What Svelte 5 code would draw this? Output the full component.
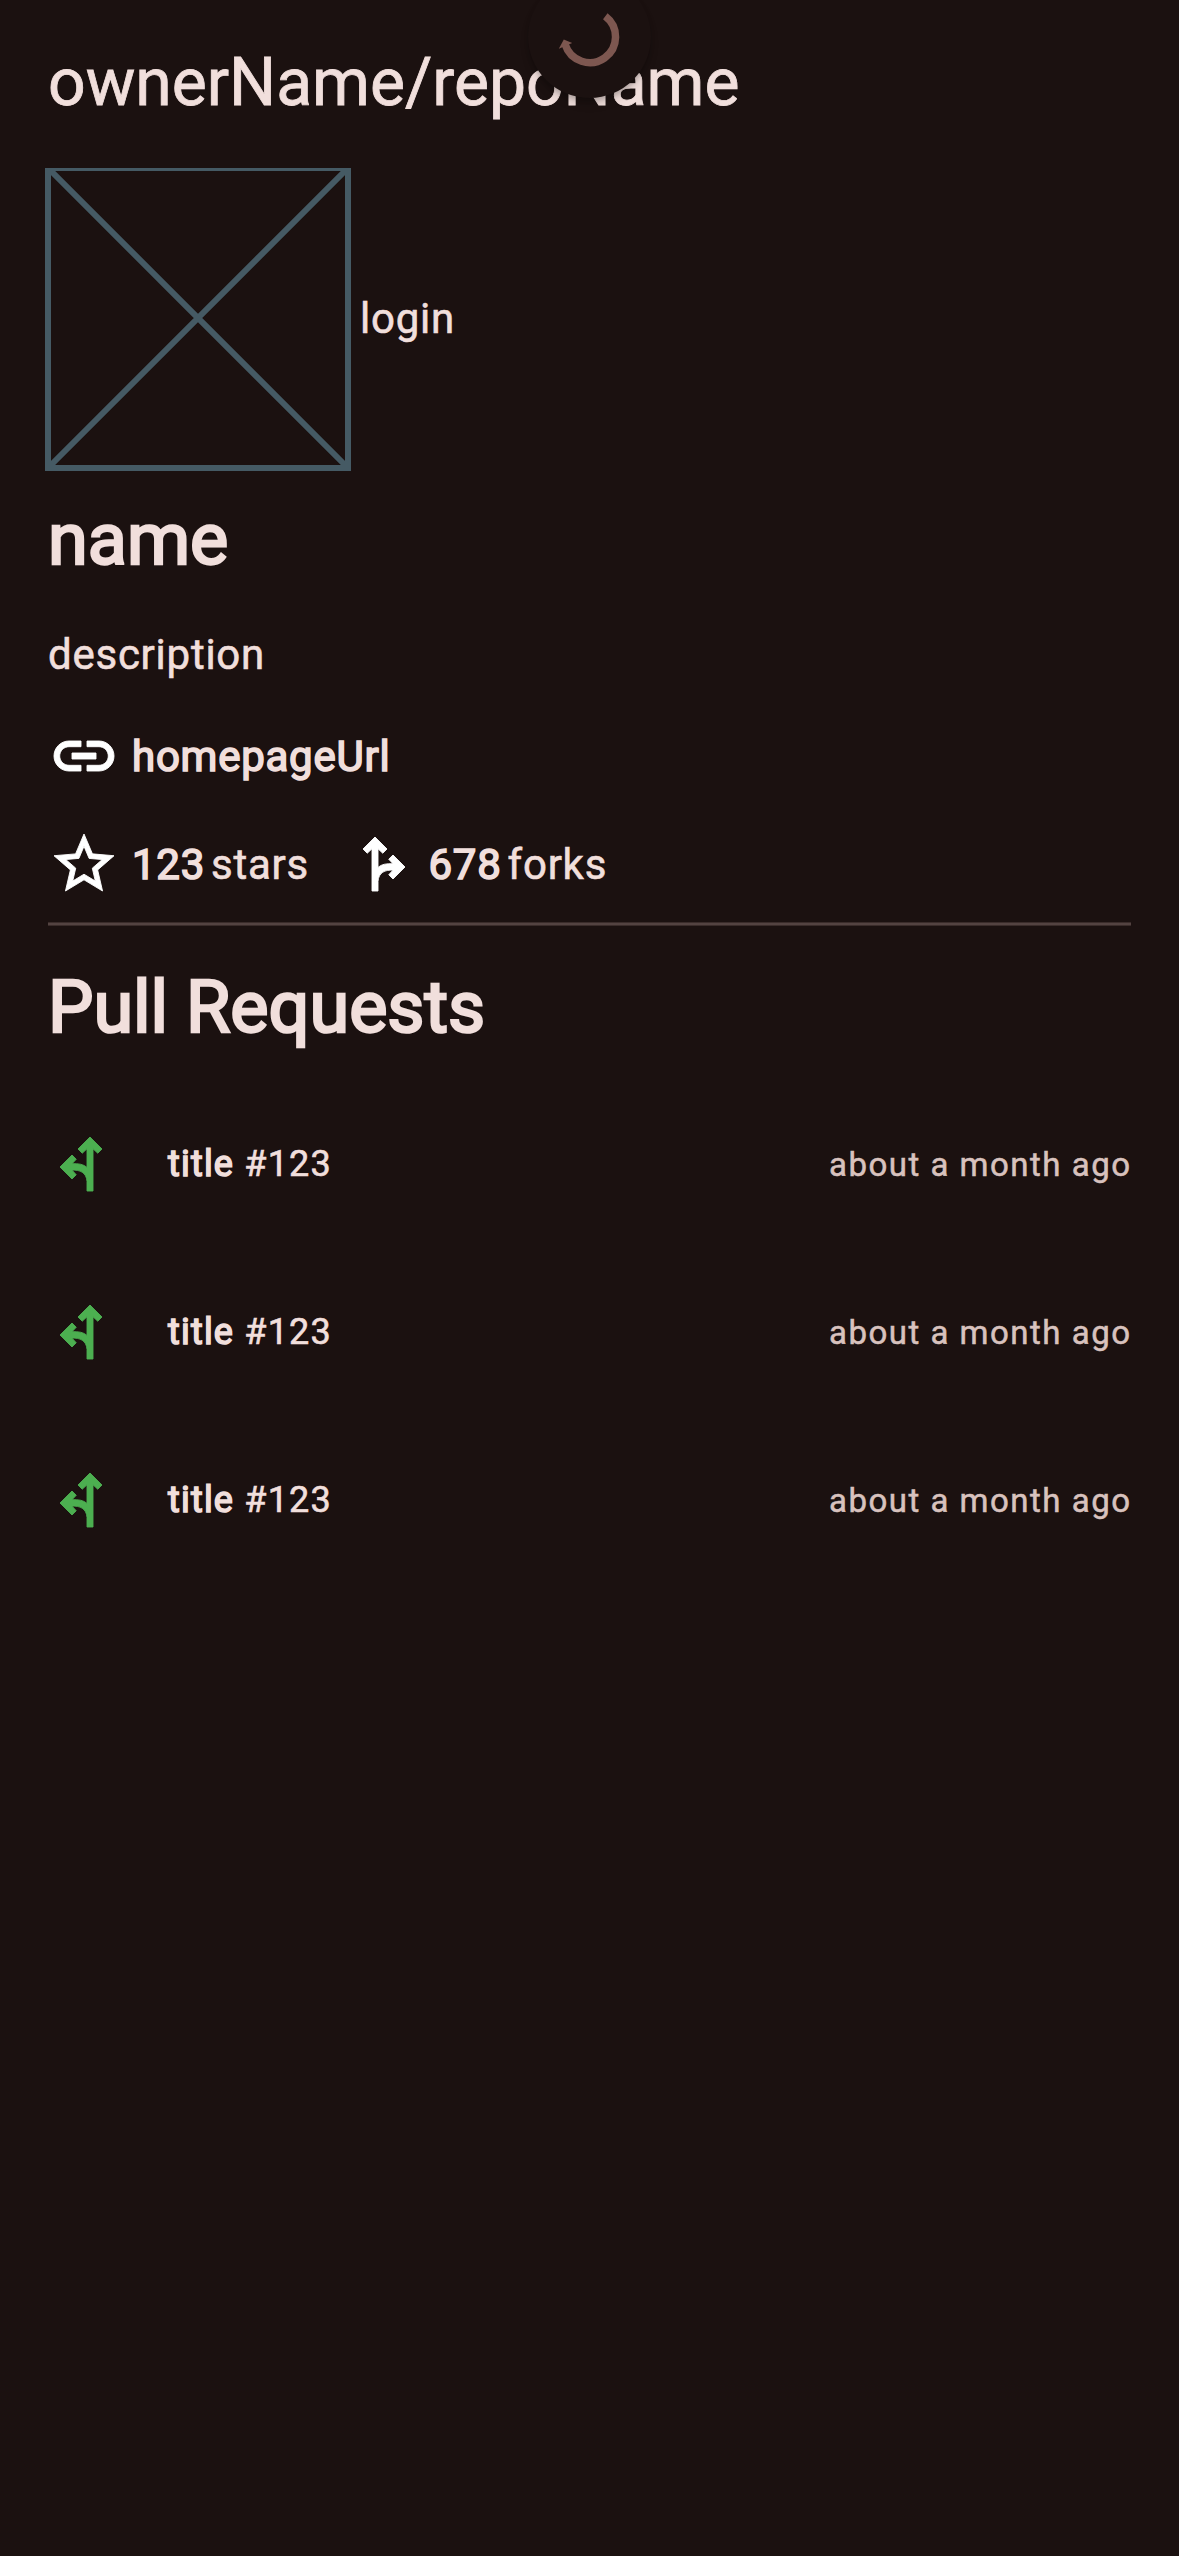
<script>
  const pulls = [1, 2, 3];
</script>

{#snippet forkRight()}
  <svg class="icon" viewBox="0 0 24 24"><path d="M10 21H8V6.93L6.41 8.41 5 7l4-4 4 4-1.41 1.41L10 6.93v6.2C11.2 12.1 12.7 11.8 15 11.9L13.58 10.41 15 9l4 4-4 4-1.41-1.41L15 14.05C12.4 13.9 10.2 14.8 10 17.8z" /></svg>
{/snippet}

<div class="screen">
  <header><h1>ownerName/repoName</h1></header>
  <div class="spinner">
    <svg viewBox="0 0 123 123">
      <path class="arc" d="M77.3 41.2A25.8 25.8 0 1 1 37.2 69.7" />
      <path class="head" d="M35.8 64.5L30.8 73.8 44.2 67.9z" />
    </svg>
  </div>

  <main>
    <div class="owner">
      <svg class="placeholder" viewBox="-3 0 306 303">
        <path d="M0 0H300V300H0ZM0 0L300 300M300 0L0 300" />
      </svg>
      <span>login</span>
    </div>
    <h2 class="name">name</h2>
    <p class="description">description</p>
    <div class="row link">
      <svg class="icon" viewBox="0 0 24 24"><path d="M3.9 12c0-1.71 1.39-3.1 3.1-3.1h4V7H7c-2.76 0-5 2.24-5 5s2.24 5 5 5h4v-1.9H7c-1.71 0-3.1-1.39-3.1-3.1zM8 13h8v-2H8v2zm9-6h-4v1.9h4c1.71 0 3.1 1.39 3.1 3.1s-1.39 3.1-3.1 3.1h-4V17h4c2.76 0 5-2.24 5-5s-2.24-5-5-5z" /></svg>
      <b>homepageUrl</b>
    </div>
    <div class="row counts">
      <svg class="icon" viewBox="0 0 24 24"><path d="M22 9.24l-7.19-.62L12 2 9.19 8.63 2 9.24l5.46 4.73L5.82 21 12 17.27 18.18 21l-1.63-7.03L22 9.24zM12 15.4l-3.76 2.27 1-4.28-3.32-2.88 4.38-.38L12 6.1l1.71 4.04 4.38.38-3.32 2.88 1 4.28L12 15.4z" /></svg>
      <b>123</b><span class="unit">stars</span>
      <span class="forks">{@render forkRight()}</span>
      <b>678</b><span class="unit">forks</span>
    </div>
    <hr />
    <h2 class="section">Pull Requests</h2>
    <ul>
      {#each pulls as pull (pull)}
        <li>
          <span class="branch">{@render forkRight()}</span>
          <span class="title"><b>title</b> #123</span>
          <time>about a month ago</time>
        </li>
      {/each}
    </ul>
  </main>
</div>

<style>
  :global(body) {
    background: #1b1110;
  }
  .screen {
    position: relative;
    min-height: 2556px;
    box-sizing: border-box;
    overflow: hidden;
    background: #1b1110;
    color: #f1dfdc;
    font-family: Roboto, sans-serif;
    font-size: 42px;
    line-height: 60px;
    letter-spacing: 0.75px;
    -webkit-text-stroke: 0.6px currentColor;
  }
  header {
    height: 168px;
    box-sizing: border-box;
    padding: 41px 48px 0;
  }
  h1,
  h2,
  p,
  ul {
    margin: 0;
    padding: 0;
    letter-spacing: 0;
  }
  h1 {
    font-size: 66px;
    line-height: 84px;
    font-weight: 400;
    -webkit-text-stroke: 0.8px currentColor;
  }
  h2 {
    font-size: 72px;
    line-height: 96px;
    font-weight: 400;
    -webkit-text-stroke: 2.5px currentColor;
  }
  b {
    font-weight: 400;
    -webkit-text-stroke: 1.6px currentColor;
  }
  .spinner {
    position: absolute;
    top: -25px;
    left: 528px;
    width: 123px;
    height: 123px;
    border-radius: 50%;
    background: #1b1110;
    box-shadow:
      0 3px 4px rgba(0, 0, 0, 0.16),
      0 7px 9px rgba(0, 0, 0, 0.12);
  }
  .spinner svg {
    display: block;
  }
  .arc {
    fill: none;
    stroke: #7d5750;
    stroke-width: 7.5;
  }
  .head {
    fill: #7d5750;
  }
  main {
    padding: 0 48px;
  }
  .owner {
    display: flex;
    align-items: center;
    gap: 12px;
    height: 300px;
  }
  .owner span,
  .row b,
  .row .unit {
    padding-top: 2px;
  }
  .placeholder {
    width: 306px;
    height: 303px;
    margin: 0 -3px -3px;
    flex: none;
  }
  .placeholder path {
    fill: none;
    stroke: #455a64;
    stroke-width: 6;
  }
  .name {
    margin-top: 24px;
  }
  .description {
    margin-top: 37px;
    letter-spacing: 0.75px;
  }
  .row {
    display: flex;
    align-items: center;
    height: 72px;
  }
  .icon {
    display: block;
    width: 72px;
    height: 72px;
    flex: none;
    fill: #fff;
  }
  .row .icon {
    stroke: #fff;
    stroke-width: 0.3;
    margin-right: 12px;
  }
  .link {
    margin-top: 35px;
  }
  .counts {
    margin-top: 36px;
  }
  .unit {
    margin-left: 6px;
  }
  .forks {
    margin-left: 38.5px;
    margin-right: -3px;
  }
  hr {
    height: 2px;
    margin: 22px 0;
    border: 1px solid #3a2c2a;
    border-width: 1px 0;
    background: #534341;
  }
  .section {
    margin-top: 34px;
  }
  ul {
    list-style: none;
    margin-top: 24px;
  }
  li {
    display: flex;
    align-items: center;
    height: 168px;
  }
  .branch {
    transform: scaleX(-1);
    margin: 0 51px 0 -3px;
  }
  .branch .icon {
    fill: #4caf50;
    stroke: #4caf50;
    stroke-width: 0.3;
  }
  .title {
    flex: 1;
    font-size: 36px;
    letter-spacing: 1.2px;
  }
  .title b {
    -webkit-text-stroke-width: 1.5px;
  }
  time {
    padding-top: 2px;
    margin-right: -0.5px;
    font-size: 33px;
    letter-spacing: 1.5px;
    color: #d8c2be;
    -webkit-text-stroke: 0.5px currentColor;
  }
</style>
